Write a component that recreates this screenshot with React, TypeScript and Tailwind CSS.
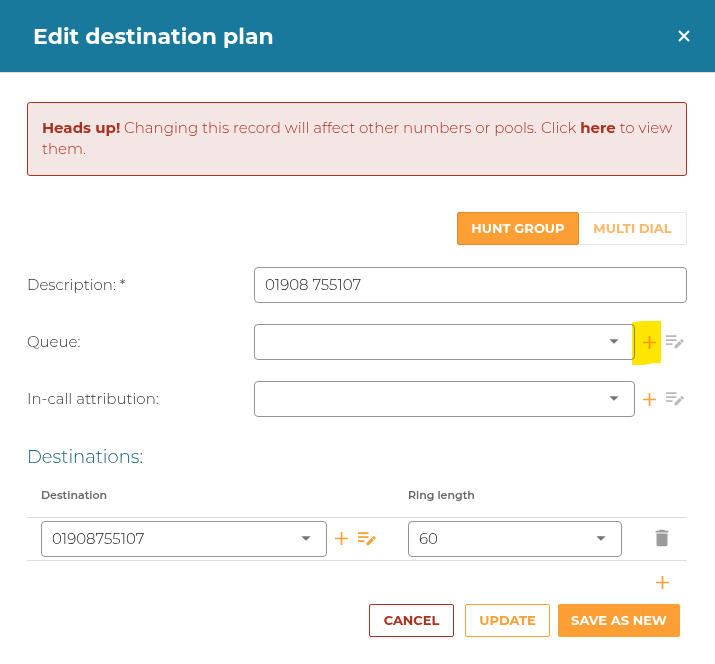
import { useState } from 'react'
import type { ReactNode } from 'react'
import { MdArrowDropDown, MdDelete } from 'react-icons/md'

function SelectBox({
  id,
  label,
  options,
  className,
}: {
  id: string
  label?: string
  options: string[]
  className: string
}) {
  return (
    <div className={`relative ${className}`}>
      <select
        id={id}
        aria-label={label}
        className="block h-9 w-full appearance-none rounded border border-[#949494] bg-white pl-2.5 pr-9 pt-0.5 text-[15px] font-light text-[#222]"
      >
        {options.map((o) => (
          <option key={o}>{o}</option>
        ))}
      </select>
      <MdArrowDropDown
        size={22}
        className="pointer-events-none absolute right-2.5 top-1.5 text-[#757575]"
      />
    </div>
  )
}

function IconButton({
  label,
  disabled,
  className,
  children,
}: {
  label: string
  disabled?: boolean
  className: string
  children: ReactNode
}) {
  return (
    <button type="button" aria-label={label} disabled={disabled} className={`flex shrink-0 items-center justify-center ${className}`}>
      {children}
    </button>
  )
}

function PlusIcon() {
  return (
    <svg width="13" height="13" viewBox="0 0 13 13" stroke="currentColor" strokeWidth="1.7">
      <path d="M6.5 0v13M0 6.5h13" />
    </svg>
  )
}

function EditIcon() {
  return (
    <svg width="18" height="14" viewBox="0 0 18 14" fill="currentColor">
      <path d="M0 .3h10.5v1.8H0zM0 4.3h10.5v1.8H0zM0 8.3h6.5v1.8H0z" />
      <path d="M8.5 11.1v2.2h2.2l5.1-5.1-2.2-2.2zM14.1 5.5l2.2 2.2 1.3-1.3q.4-.4 0-.8L16.2 4.2q-.4-.4-.8 0z" />
    </svg>
  )
}

function Field({ id, label, children }: { id: string; label: string; children: ReactNode }) {
  return (
    <div className="flex items-center">
      <label htmlFor={id} className="w-[227px] shrink-0 text-[#333]">
        {label}
      </label>
      {children}
    </div>
  )
}

export default function App() {
  const [mode, setMode] = useState('hunt')
  const [description, setDescription] = useState('01908 755107')

  return (
    <div className="min-h-screen bg-white font-['Montserrat','Inter',sans-serif] text-[15px] font-light">
      <header className="flex h-[73px] items-center justify-between border-b border-[#dcdcdc] bg-[#19799d] pl-[33px] pr-[25px] text-white">
        <h1 className="text-[22px] font-bold">Edit destination plan</h1>
        <button type="button" aria-label="Close">
          <svg width="12" height="12" viewBox="0 0 12 12" stroke="currentColor" strokeWidth="2">
            <path d="M1 1l10 10M11 1L1 11" />
          </svg>
        </button>
      </header>

      <form className="pb-6 pl-[27px] pr-7 pt-[29px]" onSubmit={(e) => e.preventDefault()}>
        <div role="alert" className="rounded-[3px] border border-[#a8321f] bg-[#f4e6e4] pb-4 pl-3.5 pr-2 pt-3.5 leading-[21px] text-[#a8321f]">
          <strong className="font-bold">Heads up!</strong> Changing this record will affect other numbers or pools. Click{' '}
          <a href="#" className="font-bold">here</a> to view them.
        </div>

        <div className="mt-9 flex justify-end text-[13px] font-bold">
          <button
            type="button"
            onClick={() => setMode('hunt')}
            aria-pressed={mode === 'hunt'}
            className="h-[33px] w-[122px] rounded-[2px] border border-[#dc8c2f] bg-[#fd9f35] text-white"
          >
            HUNT GROUP
          </button>
          <button
            type="button"
            onClick={() => setMode('multi')}
            aria-pressed={mode === 'multi'}
            className="h-[33px] w-[108px] rounded-r-[2px] border border-l-0 border-[#e6e6e6] text-[#fdb768]"
          >
            MULTI DIAL
          </button>
        </div>

        <div className="mt-[22px] flex flex-col gap-[21px]">
          <Field id="description" label="Description: *">
            <input
              id="description"
              value={description}
              onChange={(e) => setDescription(e.target.value)}
              className="h-9 min-w-0 flex-1 rounded border border-[#949494] px-2.5 pb-0.5 text-[#222]"
            />
          </Field>
          <Field id="queue" label="Queue:">
            <SelectBox id="queue" options={['']} className="min-w-0 flex-1" />
            <div className="relative -my-1">
              <IconButton label="Add queue" className="h-11 w-[26px] pl-[3px] text-[#fd9f35]">
                <PlusIcon />
              </IconButton>
              {/* marker pen highlight, drawn over the select's edge too */}
              <svg
                className="pointer-events-none absolute -left-[3px] top-px mix-blend-multiply"
                width="29"
                height="44"
                viewBox="0 0 29 44"
              >
                <path d="M0 1.5Q6 0 12 0H29V42Q18 42 12 44H0Z" fill="#ffe600" />
              </svg>
            </div>
            <IconButton label="Edit queue" disabled className="h-9 w-[26px] pl-0.5 text-[#b9b9b9]">
              <EditIcon />
            </IconButton>
          </Field>
          <Field id="attribution" label="In-call attribution:">
            <SelectBox id="attribution" options={['']} className="min-w-0 flex-1" />
            <IconButton label="Add attribution" className="h-9 w-[26px] pl-[3px] text-[#fd9f35]">
              <PlusIcon />
            </IconButton>
            <IconButton label="Edit attribution" disabled className="h-9 w-[26px] pl-0.5 text-[#b9b9b9]">
              <EditIcon />
            </IconButton>
          </Field>
        </div>

        <h2 className="mt-7 text-[18px] leading-6 text-[#14607a]">Destinations:</h2>

        <table className="mt-2 w-full table-fixed border-collapse">
          <thead>
            <tr className="h-10 border-b border-[#dedede] text-left text-[11px] text-[#666]">
              <th className="w-[367px] pb-1 pl-3.5 font-semibold">Destination</th>
              <th className="pb-1 pl-3.5 font-semibold">Ring length</th>
              <th className="w-[50px]" />
            </tr>
          </thead>
          <tbody>
            <tr className="h-[43px] border-b border-[#dedede]">
              <td className="pl-3.5">
                <div className="flex items-center">
                  <SelectBox id="destination" label="Destination" options={['01908755107']} className="w-[286px]" />
                  <IconButton label="Add destination number" className="h-9 w-[26px] pl-[3px] text-[#fd9f35]">
                    <PlusIcon />
                  </IconButton>
                  <IconButton label="Edit destination number" className="h-9 w-[26px] pl-0.5 text-[#fd9f35]">
                    <EditIcon />
                  </IconButton>
                </div>
              </td>
              <td className="pl-3.5 pr-[15px]">
                <SelectBox id="ring" label="Ring length" options={['60']} className="w-full" />
              </td>
              <td>
                <IconButton label="Delete destination" className="mx-auto h-9 pb-0.5 text-[#9b9b9b]">
                  <MdDelete size={22} />
                </IconButton>
              </td>
            </tr>
          </tbody>
        </table>
        <div className="flex h-[43px] justify-end pr-3">
          <IconButton label="Add destination" className="w-[26px] text-[#fd9f35]">
            <PlusIcon />
          </IconButton>
        </div>

        <footer className="flex justify-end pr-[7px] text-[13px] font-bold">
          <button type="button" className="mr-[11px] h-[33px] w-[85px] rounded-[2px] border border-[#a8321f] pt-0.5 text-[#a8321f]">
            CANCEL
          </button>
          <button type="button" className="mr-2 h-[33px] w-[85px] rounded-[2px] border border-[#fd9f35] pt-0.5 text-[#fd9f35]">
            UPDATE
          </button>
          <button type="submit" className="h-[33px] w-[122px] rounded-[2px] bg-[#fd9f35] pt-0.5 text-white">
            SAVE AS NEW
          </button>
        </footer>
      </form>
    </div>
  )
}
